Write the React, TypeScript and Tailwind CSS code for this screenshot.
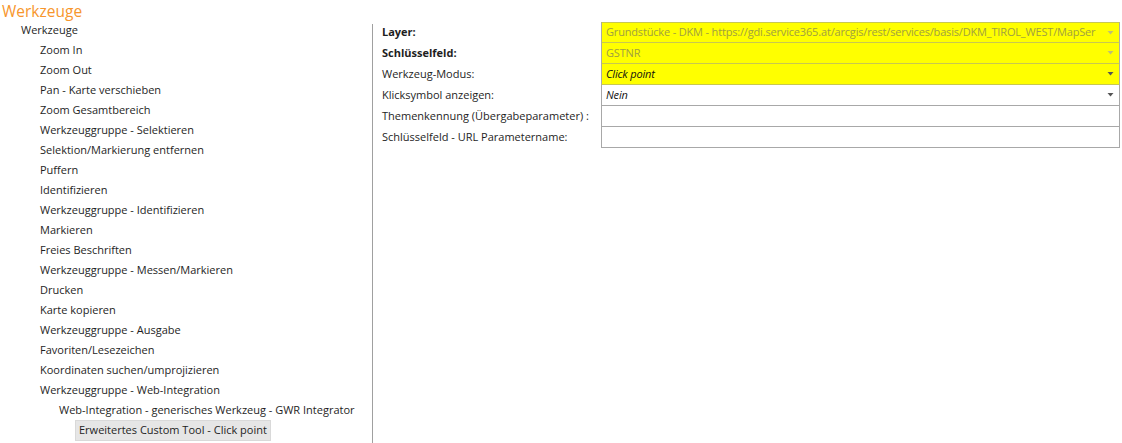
import React from "react";

const tree: { label: string; level: number; selected?: boolean }[] = [
  { label: "Werkzeuge", level: 0 },
  { label: "Zoom In", level: 1 },
  { label: "Zoom Out", level: 1 },
  { label: "Pan - Karte verschieben", level: 1 },
  { label: "Zoom Gesamtbereich", level: 1 },
  { label: "Werkzeuggruppe - Selektieren", level: 1 },
  { label: "Selektion/Markierung entfernen", level: 1 },
  { label: "Puffern", level: 1 },
  { label: "Identifizieren", level: 1 },
  { label: "Werkzeuggruppe - Identifizieren", level: 1 },
  { label: "Markieren", level: 1 },
  { label: "Freies Beschriften", level: 1 },
  { label: "Werkzeuggruppe - Messen/Markieren", level: 1 },
  { label: "Drucken", level: 1 },
  { label: "Karte kopieren", level: 1 },
  { label: "Werkzeuggruppe - Ausgabe", level: 1 },
  { label: "Favoriten/Lesezeichen", level: 1 },
  { label: "Koordinaten suchen/umprojizieren", level: 1 },
  { label: "Werkzeuggruppe - Web-Integration", level: 1 },
  { label: "Web-Integration - generisches Werkzeug - GWR Integrator", level: 2 },
  { label: "Erweitertes Custom Tool - Click point", level: 3, selected: true },
];

const padByLevel = ["pl-[21px]", "pl-[40px]", "pl-[59px]", "pl-[75px]"];

function Arrow({ color }: { color: string }) {
  return (
    <svg width="7" height="4" viewBox="0 0 7 4" className="shrink-0">
      <polygon points="0.5,0 6.5,0 3.5,3.5" fill={color} />
    </svg>
  );
}

type Row = {
  label: string;
  bold?: boolean;
  value?: string;
  yellow?: boolean;
  disabled?: boolean;
  italic?: boolean;
  arrow?: string;
};

const rows: Row[] = [
  {
    label: "Layer:",
    bold: true,
    value: "Grundstücke - DKM - https://gdi.service365.at/arcgis/rest/services/basis/DKM_TIROL_WEST/MapSer",
    yellow: true,
    disabled: true,
    arrow: "#c0c070",
  },
  { label: "Schlüsselfeld:", bold: true, value: "GSTNR", yellow: true, disabled: true, arrow: "#c0c070" },
  { label: "Werkzeug-Modus:", value: "Click point", yellow: true, italic: true, arrow: "#555" },
  { label: "Klicksymbol anzeigen:", value: "Nein", italic: true, arrow: "#555" },
  { label: "Themenkennung (Übergabeparameter) :" },
  { label: "Schlüsselfeld - URL Parametername:" },
];

export default function App() {
  return (
    <div
      className="w-[1122px] h-[443px] bg-white overflow-hidden flex flex-col text-[11px] text-[#1e1e1e]"
      style={{ fontFamily: '"Open Sans", "Noto Sans", sans-serif' }}
    >
      <div className="h-[20px] pl-[2px] text-[15.5px] leading-[22px] text-[#f7962d] whitespace-nowrap">Werkzeuge</div>
      <div className="flex flex-1 min-h-0">
        <div className="w-[372px] shrink-0 flex flex-col">
          {tree.map((t, i) => (
            <div key={i} className={`h-[20px] flex items-center whitespace-nowrap ${padByLevel[t.level]}`}>
              {t.selected ? (
                <span className="h-[21px] px-[3px] flex items-center bg-[#e6e6e6] border border-[#d9d9d9]">
                  {t.label}
                </span>
              ) : (
                <span>{t.label}</span>
              )}
            </div>
          ))}
        </div>
        <div className="w-px bg-[#a0a0a0] mt-[4px]" />
        <div className="flex-1 min-w-0 pl-[9px] pr-[2px] pt-[2px]">
          {rows.map((r, i) => (
            <div key={i} className="flex h-[21px]">
              <div
                className={`w-[219px] shrink-0 flex items-center whitespace-nowrap ${r.bold ? "font-bold" : ""}`}
              >
                {r.label}
              </div>
              <div
                className={`flex-1 min-w-0 flex items-center gap-[8px] pl-[4px] pr-[5px] border-x border-[#a8a8a8] ${
                  i === 0 ? "border-t" : ""
                } border-b ${
                  r.yellow ? "bg-[#ffff00] border-b-[#c8c850]" : "bg-white"
                } ${i === 0 ? "border-t-[#c8c850]" : ""}`}
              >
                <span
                  className={`flex-1 min-w-0 whitespace-nowrap overflow-hidden tracking-[-0.17px] ${
                    r.italic ? "italic" : ""
                  } ${r.disabled ? "text-[#a0a040]" : "text-[#111]"}`}
                >
                  {r.value ?? ""}
                </span>
                {r.arrow && <Arrow color={r.arrow} />}
              </div>
            </div>
          ))}
        </div>
      </div>
    </div>
  );
}
